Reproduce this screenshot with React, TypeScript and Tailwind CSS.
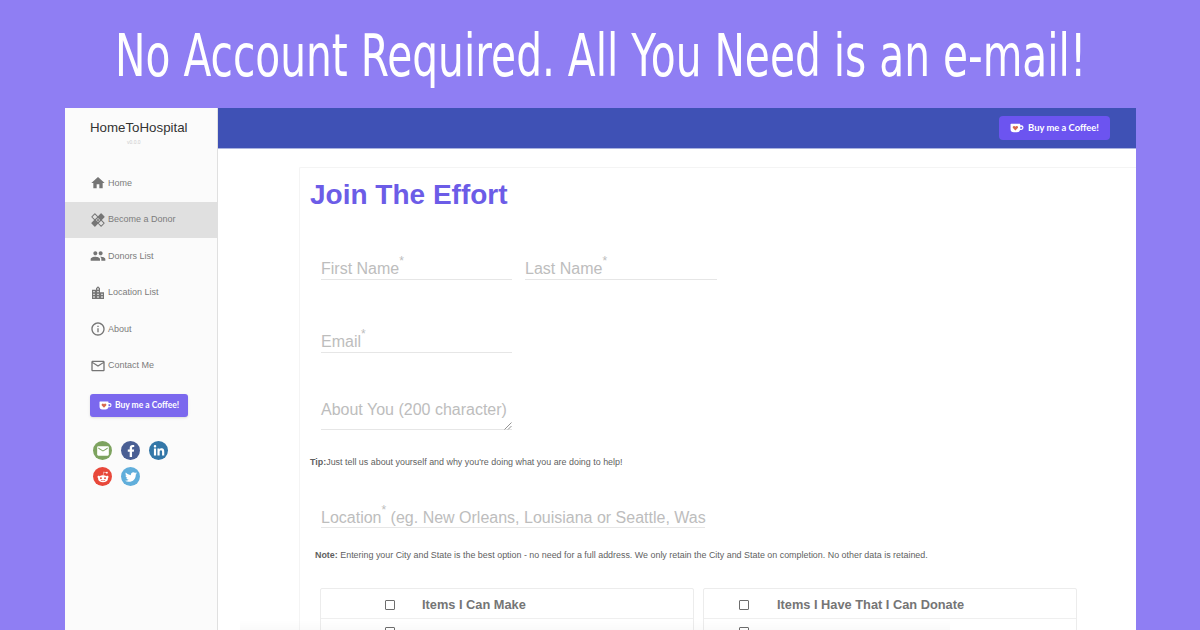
import React from "react";
import { MdHome, MdHealing, MdPeople, MdLocationCity, MdInfoOutline, MdMailOutline, MdEmail } from "react-icons/md";
import { FaFacebookF, FaLinkedinIn, FaRedditAlien, FaTwitter } from "react-icons/fa";

function Mug({ className }: { className?: string }) {
  return (
    <svg viewBox="0 0 26 18" className={className}>
      <path d="M2 1h16a1 1 0 0 1 1 1v2h2.5a3.5 3.5 0 0 1 3.5 3.5v1a4 4 0 0 1-4 4h-2.2A6 6 0 0 1 13 17H7a6 6 0 0 1-6-6V2a1 1 0 0 1 1-1z" fill="#fff" />
      <path d="M19 6.5h2a1.8 1.8 0 0 1 1.8 1.8v.4A1.8 1.8 0 0 1 21 10.5h-2z" fill="#6c5ce7" />
      <path d="M10 13.5 5.6 9a2.4 2.4 0 0 1 3.4-3.3l1 .9 1-.9A2.4 2.4 0 0 1 14.4 9z" fill="#d9694f" />
    </svg>
  );
}

function CoffeeButton({ cls, iconCls, textCls }: { cls: string; iconCls: string; textCls: string }) {
  return (
    <div className={`flex items-center justify-center ${cls}`}>
      <Mug className={iconCls} />
      <span className={`font-['Lato',sans-serif] font-bold text-white ${textCls}`}>Buy me a Coffee!</span>
    </div>
  );
}

const nav = [
  { label: "Home", Icon: MdHome },
  { label: "Become a Donor", Icon: MdHealing, active: true },
  { label: "Donors List", Icon: MdPeople },
  { label: "Location List", Icon: MdLocationCity },
  { label: "About", Icon: MdInfoOutline },
  { label: "Contact Me", Icon: MdMailOutline },
];

function Social({ bg, children }: { bg: string; children: React.ReactNode }) {
  return <div className={`flex h-[19px] w-[19px] items-center justify-center rounded-full text-white ${bg}`}>{children}</div>;
}

function Field({ label, star, width, rest, pad = "pb-[1px]" }: { label: string; star?: boolean; width: string; rest?: string; pad?: string }) {
  return (
    <div className={`flex h-[21px] items-end border-b border-[#e6e6e6] text-[16px] leading-[18px] text-[#bdbdbd] ${pad} ${width}`}>
      <span className="whitespace-nowrap">
        {label}
        {star && <sup className="-top-[9px] text-[12px] leading-none">*</sup>}
        {rest}
      </span>
    </div>
  );
}

function TableCard({ title, iconGap, cls }: { title: string; iconGap: string; cls: string }) {
  return (
    <div className={`h-[60px] shrink-0 rounded-t-[2px] border border-[#ececec] ${cls}`}>
      <div className="flex h-[30px] items-center border-b border-[#efefef] pt-[2px]">
        <div className={`h-[10px] w-[10px] shrink-0 rounded-[1px] border border-[#6d6d6d] ${iconGap}`} />
        <span className="text-[12.8px] font-bold text-[#757575]">{title}</span>
      </div>
      <div className="flex h-[30px]">
        <div className={`mt-[8px] h-[10px] w-[10px] shrink-0 rounded-[1px] border border-[#6d6d6d] ${iconGap}`} />
      </div>
    </div>
  );
}

export default function App() {
  return (
    <div className="relative flex h-[630px] w-[1200px] flex-col overflow-hidden bg-[#8f7ef3] font-['Liberation_Sans',sans-serif]">
      <div className="flex h-[108px] shrink-0 items-center justify-center pl-[2px] pt-[3px] font-['DejaVu_Sans',sans-serif] text-[58px] leading-none whitespace-nowrap text-white">
        <span className="scale-x-[0.702]">No Account Required. All You Need is an e-mail!</span>
      </div>
      <div className="ml-[65px] flex h-[522px] w-[1071px] overflow-hidden bg-white">
        <aside className="flex w-[153px] shrink-0 flex-col border-r border-[#e0e0e0] bg-[#fbfbfb]">
          <div className="mt-[12px] pl-[25px] text-[13.3px] leading-[16px] text-[#333]">HomeToHospital</div>
          <div className="pl-[62px] text-[5px] leading-[12px] text-[#ccc]">v0.0.0</div>
          <nav className="mt-[17px] flex flex-col">
            {nav.map(({ label, Icon, active }) => (
              <div key={label} className={`flex h-[36.5px] items-center pl-[25px] text-[9px] text-[#7c7c7c] ${active ? "bg-[#e0e0e0]" : ""}`}>
                <Icon className="mr-[2px] h-[16px] w-[16px] shrink-0 text-[#757575]" />
                <span>{label}</span>
              </div>
            ))}
          </nav>
          <CoffeeButton cls="ml-[25px] mt-[10px] h-[23px] w-[98px] rounded-[3px] gap-[3px] bg-[#7b68ee] shadow-sm" iconCls="h-[9px] w-[13px]" textCls="text-[8.5px]" />
          <div className="ml-[28px] mt-[24px] flex w-[76px] flex-wrap gap-x-[9px] gap-y-[7px]">
            <Social bg="bg-[#7da35f]"><MdEmail className="h-[14px] w-[14px]" /></Social>
            <Social bg="bg-[#4a5f94]"><FaFacebookF className="h-[12px] w-[12px]" /></Social>
            <Social bg="bg-[#3377a8]"><FaLinkedinIn className="h-[12px] w-[12px]" /></Social>
            <Social bg="bg-[#e8483a]"><FaRedditAlien className="h-[12px] w-[12px]" /></Social>
            <Social bg="bg-[#60aedb]"><FaTwitter className="h-[12px] w-[12px]" /></Social>
          </div>
        </aside>
        <div className="flex min-w-0 flex-1 flex-col">
          <header className="flex h-[41px] shrink-0 items-start justify-end border-b border-[#aab3df] bg-[#3f51b5] pr-[26px] pt-[8px]">
            <CoffeeButton cls="h-[24px] w-[111px] rounded-[4px] gap-[4px] bg-[#6c54f0]" iconCls="h-[10px] w-[14px]" textCls="text-[9.4px]" />
          </header>
          <main className="ml-[81px] mt-[18px] flex flex-col rounded-tl-[2px] border-l border-t border-[#f4f4f4] pl-[10px]">
            <h1 className="mt-[10px] text-[28px] font-bold leading-[34px] text-[#6c5ce7]">Join The Effort</h1>
            <div className="ml-[11px] mt-[47px] flex gap-[13px]">
              <Field label="First Name" star width="w-[191px]" />
              <Field label="Last Name" star width="w-[192px]" />
            </div>
            <div className="ml-[11px] mt-[52px]"><Field label="Email" star width="w-[191px]" /></div>
            <div className="relative ml-[11px] mt-[46px] flex h-[31px] w-[191px] items-start border-b border-[#e6e6e6] pt-[2px] text-[16px] leading-[18px] text-[#bdbdbd]">
              About You (200 character)
              <svg viewBox="0 0 8 8" className="absolute -bottom-[1px] right-0 h-[8px] w-[8px]">
                <path d="M0.5 7.5 7.5 0.5M4 7.5 7.5 4" stroke="#777" strokeWidth="0.8" />
              </svg>
            </div>
            <p className="mt-[26px] text-[8.92px] leading-[12px] text-[#5f5f5f]"><b>Tip:</b>Just tell us about yourself and why you're doing what you are doing to help!</p>
            <div className="ml-[11px] mt-[39px]">
              <Field label="Location" star rest=" (eg. New Orleans, Louisiana or Seattle, Was" width="w-[384px]" pad="pb-0" />
            </div>
            <p className="ml-[5px] mt-[21px] whitespace-nowrap text-[8.92px] leading-[12px] text-[#5f5f5f]"><b>Note:</b> Entering your City and State is the best option - no need for a full address. We only retain the City and State on completion. No other data is retained.</p>
            <div className="ml-[10px] mt-[27px] flex gap-[9px]">
              <TableCard title="Items I Can Make" iconGap="ml-[64px] mr-[27px]" cls="w-[374px]" />
              <TableCard title="Items I Have That I Can Donate" iconGap="ml-[35px] mr-[28px]" cls="w-[374px]" />
            </div>
          </main>
        </div>
      </div>
      <div className="absolute bottom-0 left-[240px] h-[10px] w-[710px] bg-gradient-to-b from-transparent to-black/[0.02]" />
    </div>
  );
}
